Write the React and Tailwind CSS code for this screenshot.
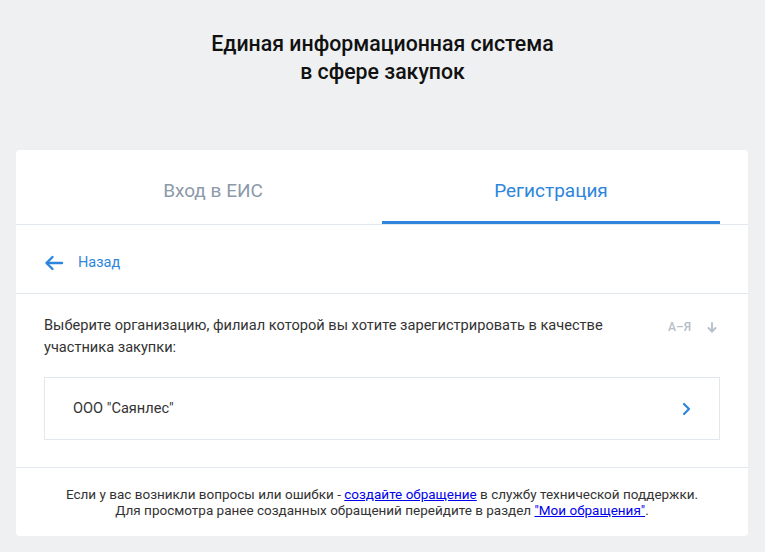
import React from "react";

const ArrowLeft = () => (
  <svg width="20" height="16" viewBox="0 0 20 16" fill="none" stroke="#2e86dc" strokeWidth="2.4" strokeLinecap="round" strokeLinejoin="round">
    <path d="M18 8H3" />
    <path d="M8.5 2L2.5 8l6 6" />
  </svg>
);

const ChevronRight = () => (
  <svg width="10" height="14" viewBox="0 0 10 14" fill="none" stroke="#2e86dc" strokeWidth="2.2" strokeLinecap="round" strokeLinejoin="round">
    <path d="M3 2l5 5-5 5" />
  </svg>
);

const ArrowDown = () => (
  <svg width="10" height="11" viewBox="0 0 10 11" fill="none" stroke="#b5bec9" strokeWidth="1.8" strokeLinecap="round" strokeLinejoin="round">
    <path d="M5 1v8.5" />
    <path d="M1.5 6L5 9.5 8.5 6" />
  </svg>
);

export default function App() {
  return (
    <div
      className="min-h-[552px] bg-[#eef0f2] px-4 pt-[30px] pb-4"
      style={{ fontFamily: "Roboto, 'Liberation Sans', sans-serif" }}
    >
      {/* Header */}
      <h1 className="text-center text-[21.3px] leading-[28px] font-medium text-[#111]">
        Единая информационная система
        <br />
        в сфере закупок
      </h1>

      <div className="mt-[64px] w-[732px] bg-white rounded-[4px]">
        {/* Tabs */}
        <div className="border-b border-[#e3e8ee]">
          <div className="mx-7 flex">
            <div className="flex-1 h-[74px] flex items-center justify-center text-[19px] text-[#8c99aa] pt-[12px] pb-[3px]">
              Вход в ЕИС
            </div>
            <div className="flex-1 h-[74px] flex items-center justify-center text-[19px] text-[#2e86dc] border-b-[3px] border-[#2e86dc] pt-[12px]">
              Регистрация
            </div>
          </div>
        </div>

        {/* Back */}
        <div className="h-[69px] px-7 pt-[7px] flex items-center border-b border-[#e3e8ee]">
          <ArrowLeft />
          <span className="ml-[14px] text-[14.5px] text-[#2e86dc]">Назад</span>
        </div>

        {/* Content */}
        <div className="px-7 pt-[20px] pb-[27px] border-b border-[#e3e8ee]">
          <div className="flex justify-between items-start">
            <p className="w-[600px] text-[14.6px] leading-[22px] text-[#333]">
              Выберите организацию, филиал которой вы хотите зарегистрировать в качестве участника закупки:
            </p>
            <div className="flex items-center gap-[16px] pt-[4px] pr-[3px]">
              <span className="text-[12px] text-[#b5bec9] font-medium">А–Я</span>
              <ArrowDown />
            </div>
          </div>
          <div className="mt-[19px] h-[63px] border border-[#e3e8ee] flex items-center justify-between pl-7 pr-7">
            <span className="text-[14.6px] text-[#333]">ООО "Саянлес"</span>
            <ChevronRight />
          </div>
        </div>

        {/* Footer */}
        <div className="pt-[18px] pb-[18px] text-center text-[13.5px] leading-[16px] text-[#333]">
          Если у вас возникли вопросы или ошибки -{" "}
          <a href="#" className="text-[#0000ee] underline">создайте обращение</a> в службу технической поддержки.
          <br />
          Для просмотра ранее созданных обращений перейдите в раздел{" "}
          <a href="#" className="text-[#0000ee] underline">"Мои обращения"</a>.
        </div>
      </div>
    </div>
  );
}
